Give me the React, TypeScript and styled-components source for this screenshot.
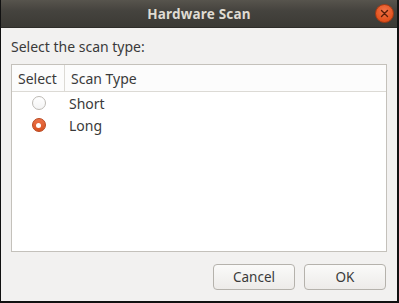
import React from "react";
import styled, { createGlobalStyle } from "styled-components";

const Global = createGlobalStyle`
  html, body { margin: 0; padding: 0; background: #000; }
  body { font-family: "Noto Sans", "DejaVu Sans", sans-serif; }
  * { box-sizing: border-box; }
`;

const Window = styled.div`
  width: 399px;
  height: 303px;
  display: flex;
  flex-direction: column;
  border-left: 1px solid #111;
  border-right: 2px solid #111;
  border-bottom: 2px solid #111;
  background: #f2f1f0;
`;

const TitleBar = styled.div`
  position: relative;
  height: 28px;
  flex: none;
  display: flex;
  align-items: center;
  justify-content: center;
  background: linear-gradient(#57544d, #45433e 40%, #3b3a35);
  border-bottom: 1px solid #2e2d29;
  color: #dfdbd2;
  font-weight: 700;
  font-size: 13.5px;
  letter-spacing: 0.2px;
`;

const CloseButton = styled.div`
  position: absolute;
  right: 3px;
  top: 4px;
  width: 19px;
  height: 19px;
  border-radius: 50%;
  background: radial-gradient(circle at 50% 35%, #f2744a, #e2521d 70%, #c8451a);
  border: 1px solid #a83a14;
  display: flex;
  align-items: center;
  justify-content: center;
`;

const Body = styled.div`
  flex: 1;
  display: flex;
  flex-direction: column;
  padding: 10px 10px 11px 10px;
  color: #3a3a3a;
  font-size: 14px;
`;

const Label = styled.div`
  height: 26px;
  line-height: 18px;
  padding-top: 0px;
`;

const TableBox = styled.div`
  height: 188px;
  width: 376px;
  border: 1px solid #c4c1bb;
  background: #fff;
  display: flex;
  flex-direction: column;
`;

const HeaderRow = styled.div`
  height: 27px;
  display: flex;
  background: #fcfcfc;
  border-bottom: 1px solid #dcdad5;
`;

const HeaderCell = styled.div<{ $w?: number }>`
  ${(p) => (p.$w ? `width: ${p.$w}px;` : "flex: 1;")}
  display: flex;
  align-items: center;
  padding-left: 6px;
  border-right: ${(p) => (p.$w ? "1px solid #dcdad5" : "none")};
`;

const Row = styled.div`
  height: 22px;
  display: flex;
  align-items: center;
`;

const RadioCell = styled.div`
  width: 53px;
  display: flex;
  justify-content: center;
`;

const TextCell = styled.div`
  padding-left: 4px;
`;

const Radio = styled.div<{ $on?: boolean }>`
  width: 14px;
  height: 14px;
  border-radius: 50%;
  display: flex;
  align-items: center;
  justify-content: center;
  ${(p) =>
    p.$on
      ? `background: linear-gradient(#ec7248, #d85222); border: 1px solid #b8461d;`
      : `background: linear-gradient(#ffffff, #f4f4f4); border: 1px solid #bdbab5;`}
`;

const Dot = styled.div`
  width: 5px;
  height: 5px;
  border-radius: 50%;
  background: #fff;
`;

const Footer = styled.div`
  flex: 1;
  display: flex;
  justify-content: flex-end;
  align-items: flex-end;
  gap: 9px;
  padding-right: 1px;
`;

const Button = styled.button`
  width: 82px;
  height: 26px;
  border: 1px solid #b5b2ac;
  border-radius: 4px;
  background: linear-gradient(#fafaf9, #edebe9);
  color: #3a3a3a;
  font-family: inherit;
  font-size: 13.5px;
  padding: 0;
`;

export default function App() {
  return (
    <>
      <Global />
      <Window>
        <TitleBar>
          Hardware Scan
          <CloseButton>
            <svg width="9" height="9" viewBox="0 0 9 9">
              <path d="M1.5 1.5 L7.5 7.5 M7.5 1.5 L1.5 7.5" stroke="#5a1e08" strokeWidth="1.4" strokeLinecap="round" />
            </svg>
          </CloseButton>
        </TitleBar>
        <Body>
          <Label>Select the scan type:</Label>
          <TableBox>
            <HeaderRow>
              <HeaderCell $w={53}>Select</HeaderCell>
              <HeaderCell>Scan Type</HeaderCell>
            </HeaderRow>
            <Row>
              <RadioCell>
                <Radio />
              </RadioCell>
              <TextCell>Short</TextCell>
            </Row>
            <Row>
              <RadioCell>
                <Radio $on>
                  <Dot />
                </Radio>
              </RadioCell>
              <TextCell>Long</TextCell>
            </Row>
          </TableBox>
          <Footer>
            <Button>Cancel</Button>
            <Button>OK</Button>
          </Footer>
        </Body>
      </Window>
    </>
  );
}
